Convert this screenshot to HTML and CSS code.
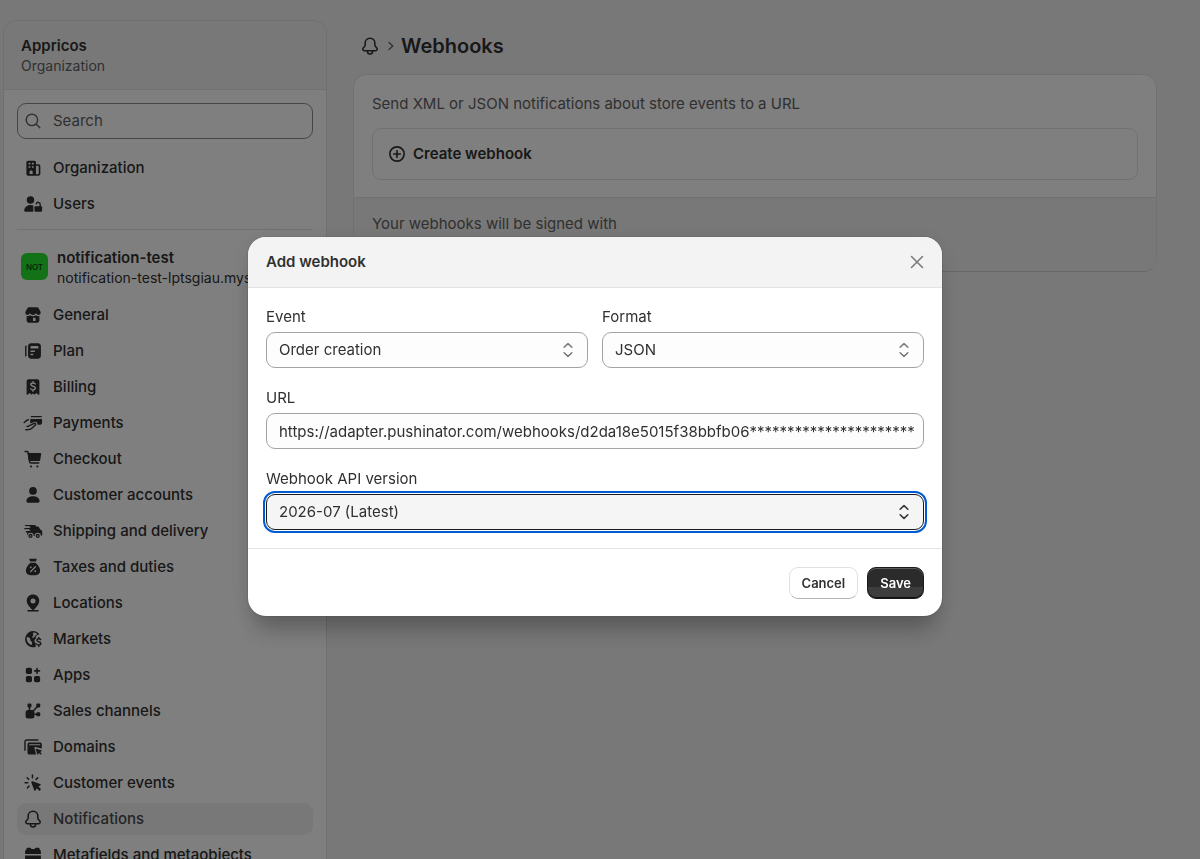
FILE: index.html
```html
<!DOCTYPE html>
<html lang="en">
<head>
<meta charset="utf-8">
<meta name="viewport" content="width=device-width, initial-scale=1">
<title>Webhooks</title>
<link rel="stylesheet" href="styles.css">
</head>
<body>
<div class="app">
  <aside class="sidebar">
    <header class="org">
      <strong class="org-name">Appricos</strong>
      <span class="org-type">Organization</span>
    </header>
    <div class="sidebar-body">
      <label class="search">
        <svg class="icon" viewBox="0 0 20 20" fill="none" stroke="currentColor" stroke-width="1.300" stroke-linecap="round"><circle cx="9" cy="9" r="5.200"/><path d="M13 13l3.200 3.200"/></svg>
        <input type="search" placeholder="Search" aria-label="Search">
      </label>
      <nav class="nav" aria-label="Organization">
        <a class="nav-item" href="#organization"><svg class="icon" viewBox="0 0 20 20" fill="currentColor"><path fill-rule="evenodd" d="M5.500 3.300h5.700c.9 0 1.500.7 1.500 1.500v1.700h2c1.200 0 2 .8 2 2v6.700c0 1-.8 1.800-1.800 1.800H5.500c-.9 0-1.500-.7-1.500-1.500V4.800c0-.8.6-1.500 1.500-1.500zM6 5.300v1.500h1.600V5.300zM9 5.300v1.500h1.600V5.300zM6 8.300v1.500h1.600V8.300zM9 8.300v1.500h1.600V8.300zM6.900 15.500v-2c0-.8.6-1.300 1.400-1.300s1.400.5 1.400 1.300v2zM12.700 7.900v7.700h1.800c.4 0 .7-.3.7-.7V8.600c0-.4-.3-.7-.7-.7z"/></svg><span>Organization</span></a>
        <a class="nav-item" href="#users"><svg class="icon" viewBox="0 0 20 20" fill="currentColor"><circle cx="7.700" cy="6.300" r="3.400"/><path d="M2 16c0-2.900 2.500-5.200 5.700-5.200 1 0 1.900.2 2.600.6V17H3c-.6 0-1-.4-1-1z"/><path d="M12.300 12h5c.6 0 1 .4 1 1v3c0 .6-.4 1-1 1h-5c-.6 0-1-.4-1-1v-3c0-.6.4-1 1-1z"/><path d="M16.500 12.500V10.300a1.800 1.800 0 0 0-3.500-.6" fill="none" stroke="currentColor" stroke-width="1.300" stroke-linecap="round"/></svg><span>Users</span></a>
      </nav>
      <hr class="divider">
      <div class="store">
        <span class="store-badge">NOT</span>
        <div class="store-text">
          <strong class="store-name">notification-test</strong>
          <span class="store-url">notification-test-lptsgiau.myshopify.com</span>
        </div>
      </div>
      <nav class="nav" aria-label="Store settings">
        <a class="nav-item" href="#general"><svg class="icon" viewBox="0 0 20 20" fill="currentColor"><path d="M6.300 3h7.400c.6 0 1.100.3 1.400.8l1.500 2.700c.3.500.4.9.4 1.400 0 1.100-.9 2-2 2-1 0-1.800-.6-2.200-1.400-.4.8-1.500 1.400-2.800 1.400s-2.400-.6-2.800-1.400c-.4.8-1.200 1.400-2.200 1.400-1.100 0-2-.9-2-2 0-.5.1-1 .4-1.400l1.500-2.700c.3-.5.800-.8 1.400-.8z"/><path fill-rule="evenodd" d="M4.200 11c1.200.2 2.200-.1 3-.8 1.700 1.100 3.900 1.100 5.600 0 .8.700 1.900 1 3 .8v4c0 1.100-.9 2-2 2H6.200c-1.100 0-2-.9-2-2zm5.800 1.500v3h2.300v-3z"/></svg><span>General</span></a>
        <a class="nav-item" href="#plan"><svg class="icon" viewBox="0 0 20 20" fill="currentColor"><rect x="2.800" y="5" width="1.300" height="10" rx=".65"/><path fill-rule="evenodd" d="M8.200 3h6.300C16 3 17.200 4.200 17.200 5.700v8.600c0 1.500-1.200 2.700-2.700 2.700H8.200c-1.500 0-2.700-1.200-2.700-2.700V5.700C5.500 4.200 6.700 3 8.200 3zm.3 2.500c-.5 0-.8.300-.8.800v1.500h7.300V6.300c0-.5-.3-.8-.8-.8zM7.700 9.500v1.300h4V9.500zm0 3v1.300h2.500v-1.300z"/></svg><span>Plan</span></a>
        <a class="nav-item" href="#billing"><svg class="icon" viewBox="0 0 20 20" fill="currentColor"><path d="M6 3h8c1 0 1.800.8 1.800 1.800v11.500c0 .7-.7 1-1.200.6L13 15.500l-1.100 1.200c-.3.300-.7.300-1 0L10 15.800l-.9.900c-.3.300-.7.300-1 0L7 15.500l-1.600 1.400c-.5.400-1.200.1-1.200-.6V4.800C4.200 3.800 5 3 6 3z"/><path d="M12 7.200c-.4-.6-1.100-.9-2-.9-1.100 0-2 .6-2 1.500 0 2.100 4.200 1 4.200 3.200 0 1-.9 1.600-2.200 1.600-1 0-1.800-.3-2.200-1M10 5.200v1M10 12.800v1" fill="none" stroke="#fff" stroke-width="1.300" stroke-linecap="round"/></svg><span>Billing</span></a>
        <a class="nav-item" href="#payments"><svg class="icon" viewBox="0 0 20 20" fill="currentColor"><path d="M9 3.700h8c.7 0 1.200.4 1.200 1.100H7.700c.2-.7.7-1.100 1.300-1.100zM7.500 6.300h10.700v3.800c0 .8-.6 1.400-1.400 1.400h-2.600c0-2-1.500-3-3.200-2.400l-3.500 1.300z"/><path d="M2 9.600l2.300-2c.4-.3.900-.5 1.400-.5M4.600 13.200c1.400 0 2.200-.5 3.100-1.300l3.500-1.500c1-.4 1.700.7.900 1.500l-2.600 2.400c-1 1-2.200 1.600-3.700 1.700l-2.300.1" fill="none" stroke="currentColor" stroke-width="1.300" stroke-linecap="round" stroke-linejoin="round"/></svg><span>Payments</span></a>
        <a class="nav-item" href="#checkout"><svg class="icon" viewBox="0 0 20 20" fill="currentColor"><path d="M2.800 3.200h1.600c.7 0 1.200.5 1.300 1.100l1.200 8.200c.1.700.6 1.100 1.300 1.100h7" fill="none" stroke="currentColor" stroke-width="1.400" stroke-linecap="round"/><path d="M5 4.500h11.500c.6 0 1 .5.900 1.100l-.8 5c-.1.700-.7 1.200-1.400 1.200H6.300z"/><circle cx="8.200" cy="16.800" r="1"/><circle cx="14" cy="16.800" r="1"/></svg><span>Checkout</span></a>
        <a class="nav-item" href="#accounts"><svg class="icon" viewBox="0 0 20 20" fill="currentColor"><circle cx="10" cy="6.300" r="3.500"/><path d="M4 15.500c0-2.500 2.700-4.300 6-4.300s6 1.800 6 4.300c0 .9-.6 1.500-1.500 1.500h-9c-.9 0-1.500-.6-1.500-1.500z"/></svg><span>Customer accounts</span></a>
        <a class="nav-item" href="#shipping"><svg class="icon" viewBox="0 0 20 20" fill="currentColor"><path d="M6.500 4.500h4.700c.8 0 1.500.5 1.700 1.300h.9c.8 0 1.500.4 1.800 1.100l.9 1.800 1 .5c.6.300.9.800.9 1.400v2.400c0 .9-.7 1.600-1.500 1.600H6c-.9 0-1.500-.7-1.500-1.600v-1.500l2-1z"/><path d="M3.200 5.100h4M2.600 7.900h6M4 10.700h3.500" fill="none" stroke="currentColor" stroke-width="1.200" stroke-linecap="round"/><path d="M3 6.500h4.600M3 9.300h4.600" fill="none" stroke="#fff" stroke-width="1"/><g fill="currentColor" stroke="#fff" stroke-width="1"><circle cx="7.700" cy="14.500" r="2.400"/><circle cx="14.300" cy="14.500" r="2.400"/></g><g fill="#fff"><circle cx="7.700" cy="14.500" r=".7"/><circle cx="14.300" cy="14.500" r=".7"/></g></svg><span>Shipping and delivery</span></a>
        <a class="nav-item" href="#taxes"><svg class="icon" viewBox="0 0 20 20" fill="currentColor"><path d="M7.200 2.500h5.600c.5 0 .7.500.5.900L12.500 5h-5l-.8-1.600c-.2-.4 0-.9.500-.9zM7.700 6.200h4.600c2.300 1.800 4.200 4.600 4.200 7.300 0 2.500-1.800 4-4.200 4H7.700c-2.400 0-4.200-1.500-4.200-4 0-2.700 1.900-5.500 4.200-7.300z"/><g stroke="#fff" stroke-width="1.200" stroke-linecap="round"><path d="M7.800 14.200l4.400-4.400"/><path d="M7.900 10.300h.1M12 13.800h.1" stroke-width="1.600"/></g></svg><span>Taxes and duties</span></a>
        <a class="nav-item" href="#locations"><svg class="icon" viewBox="0 0 20 20" fill="currentColor"><path fill-rule="evenodd" d="M10 2.300c3.300 0 5.700 2.500 5.700 5.600 0 3-2 4.800-3.800 7l-1.200 1.300c-.4.400-1 .400-1.400 0L8.100 14.900C6.300 12.700 4.300 10.900 4.300 7.900c0-3.100 2.400-5.600 5.700-5.600zm0 3.500a2.300 2.300 0 1 0 0 4.600 2.300 2.300 0 0 0 0-4.600z"/><path d="M5.500 17h9" stroke="currentColor" stroke-width="1.400" stroke-linecap="round"/></svg><span>Locations</span></a>
        <a class="nav-item" href="#markets"><svg class="icon" viewBox="0 0 20 20" fill="currentColor"><path fill-rule="evenodd" d="M10 2.800c2.600 0 4.800 1.300 6.100 3.300-.8-.2-1.700-.1-2.400.5-1 .8-1.300 1.900-1.100 3-.6.500-1.200 1.100-1.200 2.100 0 1.300.7 2.100 1.500 2.600-.6.800-.7 1.800-.2 2.700A7.300 7.300 0 0 1 2.800 10 7.200 7.200 0 0 1 10 2.800zM4.500 8c-.5 2 0 4.100 1.300 5.600.8.900 1.900 1.600 3.100 1.900-.2-1 .5-1.500.3-2.400-.2-.8-1.500-1-1.700-1.900-.2-.7.200-1.200-.2-1.800C6.800 8.700 5.300 8.700 4.500 8zM10.500 4.200c-.8.400-.7 1-.3 1.500.5.700 0 1.500-.6 1.900-.5.300-.4 1 .1 1.200.8.300 1.300-.2 1.700-.8.600-1 1.200-1.700 2.400-2.600-1-.8-2.100-1.200-3.300-1.200z"/><path d="M17 10.600c-.4-.6-1-.8-1.800-.8-1 0-1.700.5-1.700 1.300 0 1.800 3.600.9 3.600 2.900 0 .9-.8 1.400-1.900 1.400-.9 0-1.600-.3-1.900-.9M15.200 8.500v1M15.200 15.800v1" fill="none" stroke="currentColor" stroke-width="1.300" stroke-linecap="round"/></svg><span>Markets</span></a>
        <a class="nav-item" href="#apps"><svg class="icon" viewBox="0 0 20 20" fill="currentColor"><rect x="3.500" y="3.500" width="5.600" height="5.600" rx="1.500"/><rect x="3.500" y="10.900" width="5.600" height="5.600" rx="1.500"/><rect x="10.900" y="10.900" width="5.600" height="5.600" rx="1.500"/><path d="M13.700 4.100v4.400M11.500 6.300h4.400" stroke="currentColor" stroke-width="1.500" stroke-linecap="round"/></svg><span>Apps</span></a>
        <a class="nav-item" href="#channels"><svg class="icon" viewBox="0 0 20 20" fill="currentColor"><rect x="5" y="3.200" width="3.600" height="3.600" rx="1"/><rect x="13" y="3.200" width="3.600" height="3.600" rx="1"/><rect x="13" y="11.200" width="3.600" height="3.600" rx="1"/><rect x="3.300" y="9" width="8" height="7.800" rx="2.300"/><path d="M6.800 6v4M14.800 5L10 10.200M14 13h-3" stroke="currentColor" stroke-width="1.400"/></svg><span>Sales channels</span></a>
        <a class="nav-item" href="#domains"><svg class="icon" viewBox="0 0 20 20" fill="currentColor"><path d="M2.700 13V5.300c0-1 .7-1.700 1.700-1.700h10" fill="none" stroke="currentColor" stroke-width="1.300" stroke-linecap="round"/><path fill-rule="evenodd" d="M6.500 6h10c.8 0 1.500.6 1.500 1.400v4l-5.700-1.400c-.7-.2-1.200.4-1 1l1.500 5.900H6.500c-.8 0-1.500-.6-1.500-1.400V7.400C5 6.600 5.700 6 6.500 6zm0 1.400V8.500h10V7.400z"/><path d="M12.900 11.700l4.700 1.300c.5.200.5.700.1.900l-1.200.6 1.500 1.600-.9.900-1.600-1.600-.6 1.300c-.2.400-.8.400-.9-.1l-1.600-4.400c-.1-.3.200-.6.500-.5z"/></svg><span>Domains</span></a>
        <a class="nav-item" href="#events"><svg class="icon" viewBox="0 0 20 20" fill="currentColor"><path d="M9.600 8.400l6.900 2.400c.7.300.7 1.200.1 1.500l-1.700.9 2.400 2.500-1.500 1.500-2.400-2.500-.9 1.900c-.3.600-1.200.6-1.400-.1L8.500 9.600c-.2-.7.400-1.400 1.100-1.200z"/><path d="M9.500 2.800v2.400M2.800 9.800h2.400M4.700 5.200l1.400 1.400M14.300 5.200l-1.500 1.500M5 14.400l1.300-1.500" stroke="currentColor" stroke-width="1.400" stroke-linecap="round"/></svg><span>Customer events</span></a>
        <a class="nav-item nav-item--current" href="#notifications" aria-current="page"><svg class="icon" viewBox="0 0 20 20" fill="none" stroke="currentColor" stroke-width="1.400" stroke-linejoin="round"><path d="M10 2.900c-2.500 0-4.300 1.900-4.400 4.100v2c0 .7-.3 1.200-.8 1.700l-1 1.200c-.8 1-.2 2.400 1 2.400h10.400c1.200 0 1.800-1.400 1-2.400l-1-1.200c-.5-.5-.8-1-.8-1.700V7c-.1-2.200-1.900-4.100-4.400-4.100z"/><path d="M7.700 14.500v.4a2.300 2.300 0 0 0 4.600 0v-.4"/></svg><span>Notifications</span></a>
        <a class="nav-item" href="#metafields"><svg class="icon" viewBox="0 0 20 20" fill="currentColor"><path d="M5.200 3.300h2c.7 0 1.200.5 1.200 1.200h3.200c0-.7.500-1.200 1.200-1.200h2c.7 0 1.200.5 1.200 1.200v.5c.8.500 1.200 1.200 1.200 2.200V9H2.800V7.200c0-1 .4-1.700 1.200-2.200v-.5c0-.7.5-1.200 1.200-1.200z"/><path d="M2.800 10.400h14.400v4c0 1.400-1.200 2.600-2.600 2.600H5.400c-1.400 0-2.600-1.200-2.600-2.600z"/></svg><span>Metafields and metaobjects</span></a>
      </nav>
    </div>
  </aside>

  <main class="main">
    <div class="breadcrumb">
      <svg class="icon" viewBox="0 0 20 20" fill="none" stroke="currentColor" stroke-width="1.400" stroke-linejoin="round"><path d="M10 2.900c-2.500 0-4.300 1.900-4.400 4.100v2c0 .7-.3 1.200-.8 1.700l-1 1.200c-.8 1-.2 2.400 1 2.400h10.400c1.200 0 1.800-1.400 1-2.400l-1-1.200c-.5-.5-.8-1-.8-1.700V7c-.1-2.200-1.900-4.100-4.400-4.100z"/><path d="M7.700 14.500v.4a2.300 2.300 0 0 0 4.600 0v-.4"/></svg>
      <svg class="crumb-arrow" viewBox="0 0 8 12" fill="none" stroke="currentColor" stroke-width="1.300" stroke-linecap="round" stroke-linejoin="round"><path d="M2 2.500L5.800 6 2 9.500"/></svg>
      <h1>Webhooks</h1>
    </div>
    <section class="card">
      <div class="card-section">
        <p>Send XML or JSON notifications about store events to a URL</p>
        <button class="create" type="button">
          <svg class="icon" viewBox="0 0 20 20" fill="none" stroke="currentColor" stroke-width="1.500" stroke-linecap="round"><circle cx="10" cy="10" r="6.500"/><path d="M10 7v6M7 10h6"/></svg>
          <span>Create webhook</span>
        </button>
      </div>
      <div class="card-section card-section--subdued">
        <p>Your webhooks will be signed with</p>
      </div>
    </section>
  </main>
</div>

<div class="backdrop">
  <form class="modal" role="dialog" aria-modal="true" aria-labelledby="modal-title">
    <header class="modal-header">
      <h2 id="modal-title">Add webhook</h2>
      <button class="close" type="button" aria-label="Close"><svg class="icon" viewBox="0 0 20 20" fill="none" stroke="currentColor" stroke-width="1.400" stroke-linecap="round"><path d="M5 5l10 10M15 5L5 15"/></svg></button>
    </header>
    <div class="modal-body">
      <div class="field-row">
        <div class="field">
          <label for="event">Event</label>
          <div class="control">
            <select id="event"><option>Order creation</option></select>
            <svg class="icon" viewBox="0 0 20 20" fill="none" stroke="currentColor" stroke-width="1.400" stroke-linecap="round" stroke-linejoin="round"><path d="M6.500 7.500L10 4.200l3.500 3.300M6.500 12.500l3.500 3.300 3.500-3.300"/></svg>
          </div>
        </div>
        <div class="field">
          <label for="format">Format</label>
          <div class="control">
            <select id="format"><option>JSON</option></select>
            <svg class="icon" viewBox="0 0 20 20" fill="none" stroke="currentColor" stroke-width="1.400" stroke-linecap="round" stroke-linejoin="round"><path d="M6.500 7.500L10 4.200l3.500 3.300M6.500 12.500l3.500 3.300 3.500-3.300"/></svg>
          </div>
        </div>
      </div>
      <div class="field">
        <label for="url">URL</label>
        <div class="control"><input id="url" type="text" value="https://adapter.pushinator.com/webhooks/d2da18e5015f38bbfb06**********************"></div>
      </div>
      <div class="field">
        <label for="version">Webhook API version</label>
        <div class="control control--active">
          <select id="version"><option>2026-07 (Latest)</option></select>
          <svg class="icon" viewBox="0 0 20 20" fill="none" stroke="currentColor" stroke-width="1.400" stroke-linecap="round" stroke-linejoin="round"><path d="M6.500 7.500L10 4.200l3.500 3.300M6.500 12.500l3.500 3.300 3.500-3.300"/></svg>
        </div>
      </div>
    </div>
    <footer class="modal-footer">
      <button class="btn" type="button">Cancel</button>
      <button class="btn btn--primary" type="submit">Save</button>
    </footer>
  </form>
</div>
</body>
</html>
```
FILE: styles.css
```css
* { box-sizing: border-box; }

body {
  margin: 0;
  height: 100vh;
  overflow: hidden;
  background: #f1f1f1;
  color: #303030;
  font: 400 15px/20px Inter, "Liberation Sans", sans-serif;
}

h1, h2, p { margin: 0; }
button, input, select { font: inherit; color: inherit; }

.icon { width: 22px; height: 22px; flex: none; display: block; }

.app { display: flex; height: 100vh; padding: 20px 0 0 3px; }

/* Sidebar */
.sidebar {
  flex: 0 0 324px;
  border: 1px solid #e0e0e0;
  border-bottom: 0;
  border-radius: 14px 14px 0 0;
  background: #fff;
  overflow: hidden;
}
.org {
  display: flex;
  flex-direction: column;
  padding: 15px 17px 13px;
  background: #f1f1f1;
  border-bottom: 1px solid #e3e3e3;
}
.org-name { font-weight: 600; }
.org-type { font-size: 14px; color: #616161; }
.sidebar-body { padding: 13px; }
.search {
  display: flex;
  align-items: center;
  gap: 9px;
  height: 36px;
  margin-bottom: 13px;
  padding: 0 4px;
  border: 1px solid #8a8a8a;
  border-radius: 9px;
  color: #616161;
}
.search input {
  flex: 1;
  min-width: 0;
  padding: 0;
  border: 0;
  outline: 0;
  background: none;
}
.search input::placeholder { color: #616161; opacity: 1; }

.nav { display: flex; flex-direction: column; gap: 4px; }
.nav-item {
  display: flex;
  align-items: center;
  gap: 9px;
  height: 32px;
  padding: 0 5px;
  border-radius: 9px;
  color: #303030;
  font-weight: 500;
  text-decoration: none;
  white-space: nowrap;
}
.nav-item--current { background: #f0f0f0; color: #4a4a4a; }
.nav-item--current .icon { color: #303030; }

.divider { margin: 9px 0 18px; border: 0; border-top: 1px solid #e3e3e3; }

.store {
  display: flex;
  align-items: flex-start;
  gap: 9px;
  margin-bottom: 11px;
  padding: 0 4px;
  white-space: nowrap;
}
.store-badge {
  flex: none;
  width: 27px;
  height: 27px;
  margin-top: 5px;
  border-radius: 6px;
  background: #27e431;
  color: #0a3a0c;
  font-size: 8px;
  font-weight: 500;
  line-height: 28px;
  text-align: center;
}
.store-text { display: flex; flex-direction: column; }
.store-name { font-weight: 600; }
.store-url { font-size: 14px; }

/* Main column */
.main { flex: 1; min-width: 0; padding: 12px 43px 0 26px; }
.breadcrumb { display: flex; align-items: center; gap: 6px; height: 28px; margin-bottom: 14px; padding-left: 6px; }
.breadcrumb h1 { font-size: 20px; line-height: 28px; font-weight: 600; }
.crumb-arrow { width: 8px; height: 12px; color: #616161; }
.card {
  border: 1px solid #e3e3e3;
  border-bottom-color: #d0d0d0;
  border-radius: 14px;
  background: #fff;
  color: #616161;
  overflow: hidden;
}
.card-section { padding: 19px 18px 17px; }
.card-section--subdued { min-height: 74px; padding-top: 16px; border-top: 1px solid #e3e3e3; background: #f1f1f1; }
.create {
  display: flex;
  align-items: center;
  gap: 5px;
  width: 100%;
  height: 52px;
  margin-top: 14px;
  padding: 0 13px;
  border: 1px solid #e3e3e3;
  border-radius: 9px;
  background: none;
  color: #303030;
  font-weight: 600;
}

/* Modal */
.backdrop {
  position: fixed;
  inset: 0;
  display: flex;
  align-items: center;
  justify-content: center;
  padding: 0 10px 6px 0;
  background: rgba(0, 0, 0, .5);
}
.modal {
  width: 100%;
  max-width: 694px;
  border-radius: 18px;
  background: #fff;
  overflow: hidden;
  box-shadow: 0 22px 22px -8px rgba(26, 26, 26, .28), 0 4px 22px rgba(0, 0, 0, .1), 0 0 1px #333;
}
.modal-header {
  display: flex;
  align-items: center;
  justify-content: space-between;
  height: 51px;
  padding: 0 14px 0 18px;
  background: #f3f3f3;
  border-bottom: 1px solid #e3e3e3;
}
.modal-header h2 { font-size: 15px; line-height: 20px; font-weight: 600; }
.close { padding: 0; border: 0; background: none; color: #7a7a7a; }
.modal-body { display: flex; flex-direction: column; gap: 20px; padding: 19px 18px 18px; }
.field-row { display: grid; grid-template-columns: 1fr 1fr; gap: 14px; }
.field { display: flex; flex-direction: column; gap: 5px; min-width: 0; }
.control { display: grid; align-items: center; height: 36px; border-radius: 9px; }
.control > * { grid-area: 1 / 1; }
.control > .icon { justify-self: end; margin-right: 9px; color: #7a7a7a; pointer-events: none; }
.control select,
.control input {
  width: 100%;
  height: 36px;
  padding: 0 0 0 12px;
  border: 1px solid #a3a3a3;
  border-radius: 9px;
  outline: 0;
  background: #fdfdfd;
  appearance: none;
}
.control--active { outline: 2px solid #005bd3; outline-offset: 1px; }
.control--active select { background: #f5f5f5; border-color: #1a1a1a; }
.control--active > .icon { color: #303030; }

.modal-footer {
  display: flex;
  justify-content: flex-end;
  gap: 9px;
  padding: 18px 18px 17px;
  border-top: 1px solid #e3e3e3;
}
.btn {
  height: 32px;
  padding: 0 12px;
  border: 1px solid #e0e0e0;
  border-bottom-color: #b5b5b5;
  border-radius: 9px;
  background: #fff;
  font-size: 13px;
  font-weight: 600;
}
.btn--primary {
  border-color: #1a1a1a;
  background: linear-gradient(#2b2b2b 65%, #3d3d3d 65%);
  color: #fff;
  box-shadow: inset 0 1px 0 #5c5c5c, inset 0 -1px 0 #111;
}
```
